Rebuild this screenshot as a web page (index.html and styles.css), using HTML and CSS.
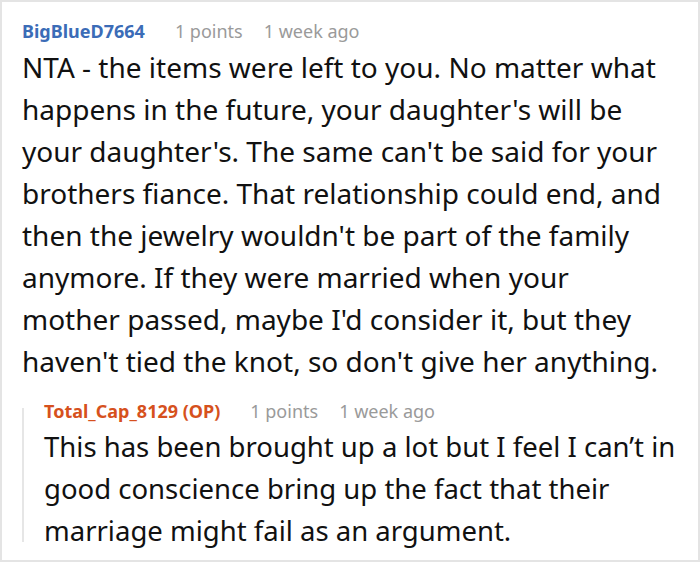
FILE: index.html
```html
<!DOCTYPE html>
<html>
<head>
<meta charset="utf-8">
<link rel="stylesheet" href="styles.css">
</head>
<body>
<div class="card">
  <div class="comment">
    <div class="meta">
      <span class="user">BigBlueD7664</span>
      <span class="info">1 points</span>
      <span class="info">1 week ago</span>
    </div>
    <p class="body">NTA - the items were left to you. No matter what happens in the future, your daughter's will be your daughter's. The same can't be said for your brothers fiance. That relationship could end, and then the jewelry wouldn't be part of the family anymore. If they were married when your<br>mother passed, maybe I'd consider it, but they haven't tied the knot, so don't give her anything.</p>
    <div class="reply">
      <div class="rule"></div>
      <div class="reply-content">
        <div class="meta">
          <span class="user op">Total_Cap_8129 (OP)</span>
          <span class="info">1 points</span>
          <span class="info">1 week ago</span>
        </div>
        <p class="body reply-body">This has been brought up a lot but I feel I can’t in good conscience bring up the fact that their marriage might fail as an argument.</p>
      </div>
    </div>
  </div>
</div>
</body>
</html>
```
FILE: styles.css
```css
html, body {
  margin: 0;
  padding: 0;
  background: #fff;
}
.card {
  box-sizing: border-box;
  width: 700px;
  height: 562px;
  border: 2px solid #e4e4e4;
  font-family: "Noto Sans", "Open Sans", sans-serif;
  overflow: hidden;
}
.comment {
  padding: 16px 14px 0 20px;
}
.meta {
  display: flex;
  gap: 21px;
  font-size: 18px;
  line-height: 26px;
}
.user {
  font-weight: bold;
  color: #3b6cb7;
  margin-right: 9px;
}
.user.op {
  color: #d6511d;
}
.info {
  color: #9a9a9a;
}
.body {
  margin: 2px 0 0 0;
  font-size: 28px;
  line-height: 42px;
  color: #111;
}
.reply {
  display: flex;
  gap: 20px;
  margin-top: 16px;
}
.rule {
  width: 2px;
  flex: none;
  background: #e6e6e6;
  margin: 10px 0 10px 0;
}
.reply-content {
  flex: 1;
}
.reply-body {
  margin-top: 2px;
  font-size: 27.5px;
}
```
